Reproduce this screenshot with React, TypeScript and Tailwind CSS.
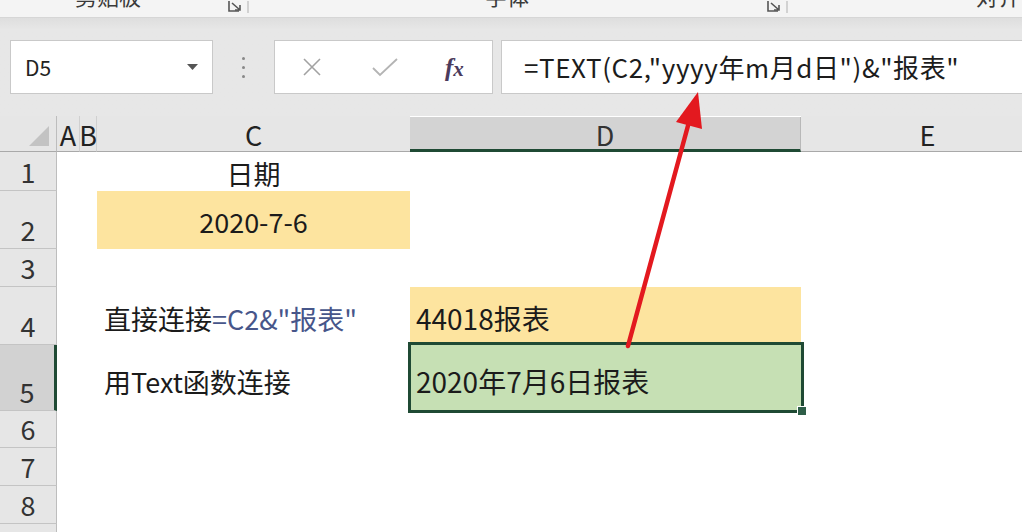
import React from "react";

const font = "font-['Noto_Sans_CJK_SC','Noto_Sans',sans-serif]";

function Launcher() {
  return (
    <svg width="24" height="12" viewBox="0 0 24 12" className="text-[#555]">
      <path d="M2 0 V10 H12" fill="none" stroke="currentColor" strokeWidth="1.6" />
      <path d="M5 2 L13 9 M8 9 H13 V4" fill="none" stroke="currentColor" strokeWidth="1.6" />
      <path d="M21 0 V12" fill="none" stroke="#bbb" strokeWidth="1.2" />
    </svg>
  );
}

function Ribbon() {
  return (
    <div className="h-[18px] bg-[#f4f4f4] border-b border-[#d6d6d6] overflow-hidden flex items-start text-[22px] text-[#3a3a3a] leading-none">
      <span className="ml-[75px] -mt-[16px]">剪贴板</span>
      <span className="ml-[86px] mt-[1px]"><Launcher /></span>
      <span className="ml-[234px] -mt-[16px]">字体</span>
      <span className="ml-[237px] mt-[1px]"><Launcher /></span>
      <span className="ml-[186px] -mt-[16px]">对齐</span>
    </div>
  );
}

function FormulaArea() {
  return (
    <div className="h-[98px] bg-[#e6e6e6] bg-gradient-to-b from-[#dedede] to-[#e7e7e7] to-[12%] pt-[22px]">
      <div className="flex items-stretch h-[54px]">
        <div className="ml-[10px] w-[203px] bg-white border border-[#c9c9c9] flex items-center justify-between pl-[14px] pr-[14px]">
          <span className="text-[21px] text-[#222] leading-none">D5</span>
          <svg width="11" height="6" viewBox="0 0 11 6"><path d="M0 0 H11 L5.5 6 Z" fill="#555" /></svg>
        </div>
        <div className="w-[61px] flex flex-col items-center justify-center gap-[6px]">
          <span className="w-[3px] h-[3px] rounded-full bg-[#888]" />
          <span className="w-[3px] h-[3px] rounded-full bg-[#888]" />
          <span className="w-[3px] h-[3px] rounded-full bg-[#888]" />
        </div>
        <div className="w-[219px] bg-white border border-[#c9c9c9] flex items-center pl-[27px]">
          <svg width="20" height="20" viewBox="0 0 20 20">
            <path d="M2 2 L18 18 M18 2 L2 18" stroke="#a2a2a2" strokeWidth="1.6" fill="none" />
          </svg>
          <svg width="26" height="20" viewBox="0 0 26 20" className="ml-[50px]">
            <path d="M1 11 L8 18 L25 2" stroke="#b4b4b4" strokeWidth="1.8" fill="none" />
          </svg>
          <span className="ml-[47px] font-['Liberation_Serif',serif] italic font-bold text-[25px] leading-none text-[#4b3a5c]">
            f<span className="text-[21px]">x</span>
          </span>
        </div>
        <div className="ml-[8px] flex-1 bg-white border border-[#c9c9c9] border-r-0 flex items-center pl-[22px]">
          <span className="text-[26px] leading-none text-[#1c1c1c] tracking-[0.6px]">=TEXT(C2,"yyyy年m月d日")&amp;"报表"</span>
        </div>
      </div>
    </div>
  );
}

export default function App() {
  const rowHead = (n: number | null, selected = false) => (
    <div
      className={`flex items-end justify-center pb-[5px] text-[27px] leading-none text-[#333] border-b border-[#c4c4c4] ${
        selected ? "bg-[#d2d2d2] border-r-[3px] border-r-[#1f4a34]" : "bg-[#e6e6e6] border-r border-r-[#bdbdbd]"
      }`}
    >
      {n}
    </div>
  );

  return (
    <div className={`w-[1022px] h-[532px] overflow-hidden bg-white relative ${font}`}>
      <Ribbon />
      <FormulaArea />

      <div className="grid grid-cols-[57px_23px_17px_313px_391px_1fr] grid-rows-[36px_39px_58px_38px_58px_66px_37px_38px_38px_20px] text-[#1b1b1b]">
        {/* column headers */}
        <div className="bg-[#e6e6e6] border-b border-[#a9a9a9] border-r border-r-[#bdbdbd] flex items-end justify-end pr-[7px] pb-[5px]">
          <svg width="20" height="20" viewBox="0 0 20 20"><path d="M20 0 V20 H0 Z" fill="#c3c3c3" /></svg>
        </div>
        <div className="bg-[#e6e6e6] border-b border-[#a9a9a9] border-r border-r-[#d0d0d0] flex items-end justify-center pb-[3px] text-[27px] leading-none text-[#222]">A</div>
        <div className="bg-[#e6e6e6] border-b border-[#a9a9a9] border-r border-r-[#d0d0d0] flex items-end justify-center pb-[3px] text-[27px] leading-none text-[#222]">B</div>
        <div className="bg-[#e6e6e6] border-b border-[#a9a9a9] flex items-end justify-center pb-[3px] text-[27px] leading-none text-[#222]">C</div>
        <div className="bg-[#d3d3d3] border-b-[3px] border-[#1f4a34] border-r border-r-[#b8b8b8] mt-[1px] flex items-end justify-center pb-[1px] text-[27px] leading-none text-[#333]">D</div>
        <div className="bg-[#e6e6e6] border-b border-[#a9a9a9] flex items-end justify-center pl-[32px] pb-[3px] text-[27px] leading-none text-[#222]">E</div>

        {/* row 1 */}
        {rowHead(1)}
        <div className="col-span-2" />
        <div className="flex items-end justify-center pb-[4px] text-[27px] leading-none">日期</div>
        <div className="col-span-2" />

        {/* row 2 */}
        {rowHead(2)}
        <div className="col-span-2" />
        <div className="bg-[#fde49f] flex items-center justify-center pt-[2px] text-[27px] leading-none">2020-7-6</div>
        <div className="col-span-2" />

        {/* row 3 */}
        {rowHead(3)}
        <div className="col-span-5" />

        {/* row 4 */}
        {rowHead(4)}
        <div className="col-span-2" />
        <div className="flex items-end pl-[7px] pb-[13px] text-[27px] leading-none">
          直接连接<span className="text-[#47568a]">=C2&amp;"报表"</span>
        </div>
        <div className="bg-[#fde49f] flex items-end pl-[6px] pb-[13px] text-[28px] leading-none">44018报表</div>
        <div />

        {/* row 5 */}
        {rowHead(5, true)}
        <div className="col-span-2" />
        <div className="flex items-end pl-[7px] pb-[16px] text-[27px] leading-none">用Text函数连接</div>
        <div className="relative bg-[#c6e0b4] flex items-end pl-[6px] pb-[16px] text-[28px] leading-none">
          2020年7月6日报表
          <div className="absolute -left-[2px] -top-[3px] -right-[3px] -bottom-[2px] border-[3px] border-[#1f4a34] pointer-events-none" />
          <div className="absolute -right-[6px] -bottom-[5px] w-[10px] h-[10px] bg-[#2e5e48] border-[1.5px] border-white" />
        </div>
        <div />

        {/* rows 6-9 */}
        {[6, 7, 8, null].map((n, i) => (
          <React.Fragment key={i}>
            {rowHead(n)}
            <div className="col-span-5" />
          </React.Fragment>
        ))}
      </div>

      {/* red arrow annotation */}
      <svg className="absolute inset-0 pointer-events-none" width="1022" height="532" viewBox="0 0 1022 532">
        <line x1="628" y1="346" x2="689" y2="122" stroke="#e3191f" strokeWidth="4.5" strokeLinecap="round" />
        <polygon points="698,92 676,122 702,129" fill="#e3191f" />
      </svg>
    </div>
  );
}
